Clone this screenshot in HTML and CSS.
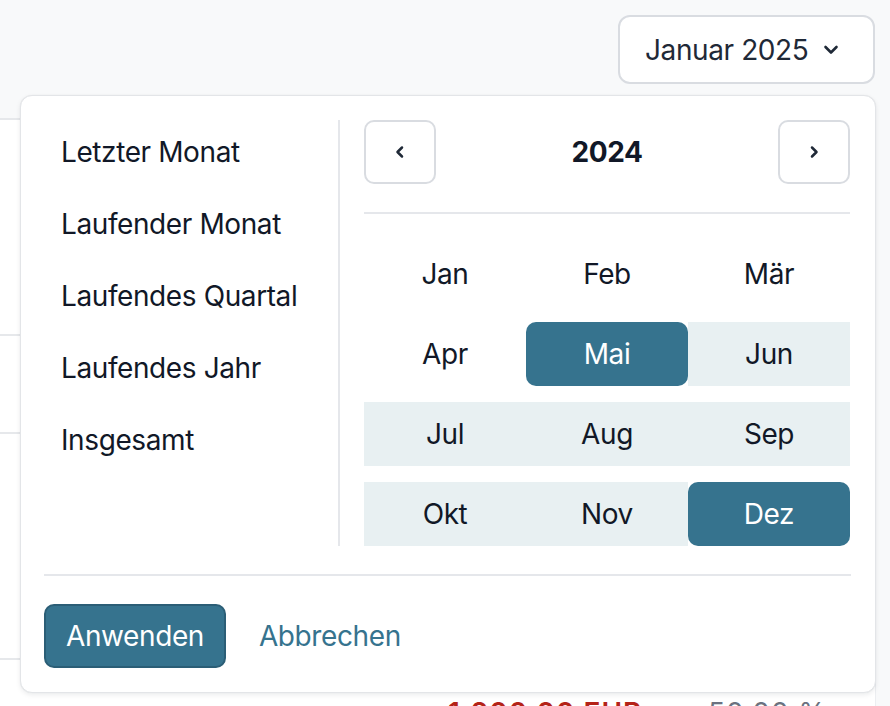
FILE: index.html
```html
<!DOCTYPE html>
<html lang="de">
<head>
<meta charset="utf-8">
<title>Zeitraum wählen</title>
<link rel="stylesheet" href="styles.css">
</head>
<body>
<div class="page">
  <header class="topbar">
    <button class="period-btn">
      <span>Januar 2025</span>
      <svg class="chev-down" width="20" height="20" viewBox="0 0 20 20"><polyline points="4.5,7 10,12.5 15.5,7" fill="none" stroke="#1f2937" stroke-width="2.6" stroke-linecap="round" stroke-linejoin="round"/></svg>
    </button>
  </header>

  <section class="card">
    <div class="row r1"></div>
    <div class="row r2"></div>
    <div class="row r3"></div>
    <div class="row r4">
      <span class="spacer"></span>
      <span class="amount">1.200,00 EUR</span>
      <span class="pct">50,00 %</span>
    </div>
  </section>

  <div class="popover">
    <div class="main">
      <ul class="presets">
        <li>Letzter Monat</li>
        <li>Laufender Monat</li>
        <li>Laufendes Quartal</li>
        <li>Laufendes Jahr</li>
        <li>Insgesamt</li>
      </ul>
      <div class="calendar">
        <div class="nav">
          <button class="nav-btn" aria-label="Vorheriges Jahr">
            <svg width="16" height="16" viewBox="0 0 16 16"><polyline points="10,3.5 5.5,8 10,12.5" fill="none" stroke="#1f2937" stroke-width="2.5" stroke-linecap="round" stroke-linejoin="round"/></svg>
          </button>
          <span class="year">2024</span>
          <button class="nav-btn" aria-label="Nächstes Jahr">
            <svg width="16" height="16" viewBox="0 0 16 16"><polyline points="6,3.5 10.5,8 6,12.5" fill="none" stroke="#1f2937" stroke-width="2.5" stroke-linecap="round" stroke-linejoin="round"/></svg>
          </button>
        </div>
        <div class="months">
          <div class="month">Jan</div>
          <div class="month">Feb</div>
          <div class="month">Mär</div>
          <div class="month">Apr</div>
          <div class="month selected">Mai</div>
          <div class="month in-range">Jun</div>
          <div class="month in-range">Jul</div>
          <div class="month in-range">Aug</div>
          <div class="month in-range">Sep</div>
          <div class="month in-range">Okt</div>
          <div class="month in-range">Nov</div>
          <div class="month selected">Dez</div>
        </div>
      </div>
    </div>
    <div class="footer">
      <button class="apply">Anwenden</button>
      <button class="cancel">Abbrechen</button>
    </div>
  </div>
</div>
</body>
</html>
```

FILE: styles.css
```css
* { box-sizing: border-box; }

html, body {
  margin: 0;
  padding: 0;
}

body {
  background: #f8f9fa;
  font-family: "Inter", "Noto Sans", sans-serif;
  color: #111827;
  letter-spacing: -0.4px;
  overflow: hidden;
}

button { letter-spacing: inherit; }

.page {
  position: relative;
  width: 890px;
  height: 706px;
}

.topbar {
  height: 118px;
  display: flex;
  justify-content: flex-end;
  align-items: flex-start;
  padding: 15px 15px 0 0;
}

.period-btn {
  height: 69px;
  width: 257px;
  display: flex;
  align-items: center;
  padding: 0 0 0 25px;
  gap: 13px;
  background: #ffffff;
  border: 2px solid #d9dce1;
  border-radius: 12px;
  font-family: inherit;
  font-size: 28px;
  color: #1f2937;
}

.chev-down { margin-top: 1px; }

.card {
  width: 876px;
  background: #ffffff;
  border-top: 2px solid #e6e8eb;
  border-right: 1px solid #eceef1;
}

.row {
  border-bottom: 2px solid #e6e8eb;
}
.r1 { height: 216px; }
.r2 { height: 98px; }
.r3 { height: 226px; }
.r4 {
  border-bottom: none;
  display: flex;
  padding-top: 36px;
  font-size: 28px;
  line-height: 34px;
  height: 72px;
}
.spacer { width: 448px; }
.amount {
  width: 260px;
  color: #b42318;
  font-weight: 600;
  letter-spacing: 1px;
}
.pct { color: #6b7280; letter-spacing: 1px; }

.popover {
  position: absolute;
  left: 20px;
  top: 95px;
  width: 856px;
  height: 598px;
  background: #ffffff;
  border: 1px solid #e3e5e8;
  border-radius: 12px;
  box-shadow: 0 2px 5px rgba(17, 24, 39, 0.08), 0 0 1px rgba(17, 24, 39, 0.08);
  padding: 24px 24px 24px 23px;
  display: flex;
  flex-direction: column;
}

.main {
  display: flex;
  gap: 24px;
  height: 427px;
}

.presets {
  list-style: none;
  margin: 0;
  padding: 0;
  width: 296px;
  border-right: 2px solid #e5e7eb;
  display: flex;
  flex-direction: column;
  gap: 8px;
}

.presets li {
  height: 64px;
  display: flex;
  align-items: center;
  padding-left: 17px;
  font-size: 28px;
  color: #111827;
}

.calendar {
  width: 486px;
  display: flex;
  flex-direction: column;
}

.nav {
  height: 64px;
  display: flex;
  align-items: center;
  justify-content: space-between;
  padding-bottom: 28px;
  box-sizing: content-box;
  border-bottom: 2px solid #e5e7eb;
  margin-bottom: 28px;
}

.nav-btn {
  width: 72px;
  height: 64px;
  border: 2px solid #d9dce1;
  border-radius: 10px;
  background: #ffffff;
  display: flex;
  align-items: center;
  justify-content: center;
  padding: 0;
}

.year {
  font-size: 28px;
  font-weight: 700;
  color: #111827;
}

.months {
  display: grid;
  grid-template-columns: repeat(3, 162px);
  grid-auto-rows: 64px;
  row-gap: 16px;
}

.month {
  display: flex;
  align-items: center;
  justify-content: center;
  font-size: 28px;
  color: #111827;
}

.month.in-range {
  background: #e8f0f2;
}

.month.selected {
  background: #36738e;
  color: #ffffff;
  border-radius: 10px;
}

.footer {
  margin-top: 28px;
  border-top: 2px solid #e5e7eb;
  padding-top: 28px;
  display: flex;
  align-items: center;
  gap: 33px;
}

.apply {
  height: 64px;
  padding: 0 20px;
  background: #36738e;
  color: #ffffff;
  border: 2px solid #2b5e76;
  border-radius: 10px;
  font-family: inherit;
  font-size: 28px;
}

.cancel {
  background: none;
  border: none;
  padding: 0;
  font-family: inherit;
  font-size: 28px;
  color: #36738e;
}
```
